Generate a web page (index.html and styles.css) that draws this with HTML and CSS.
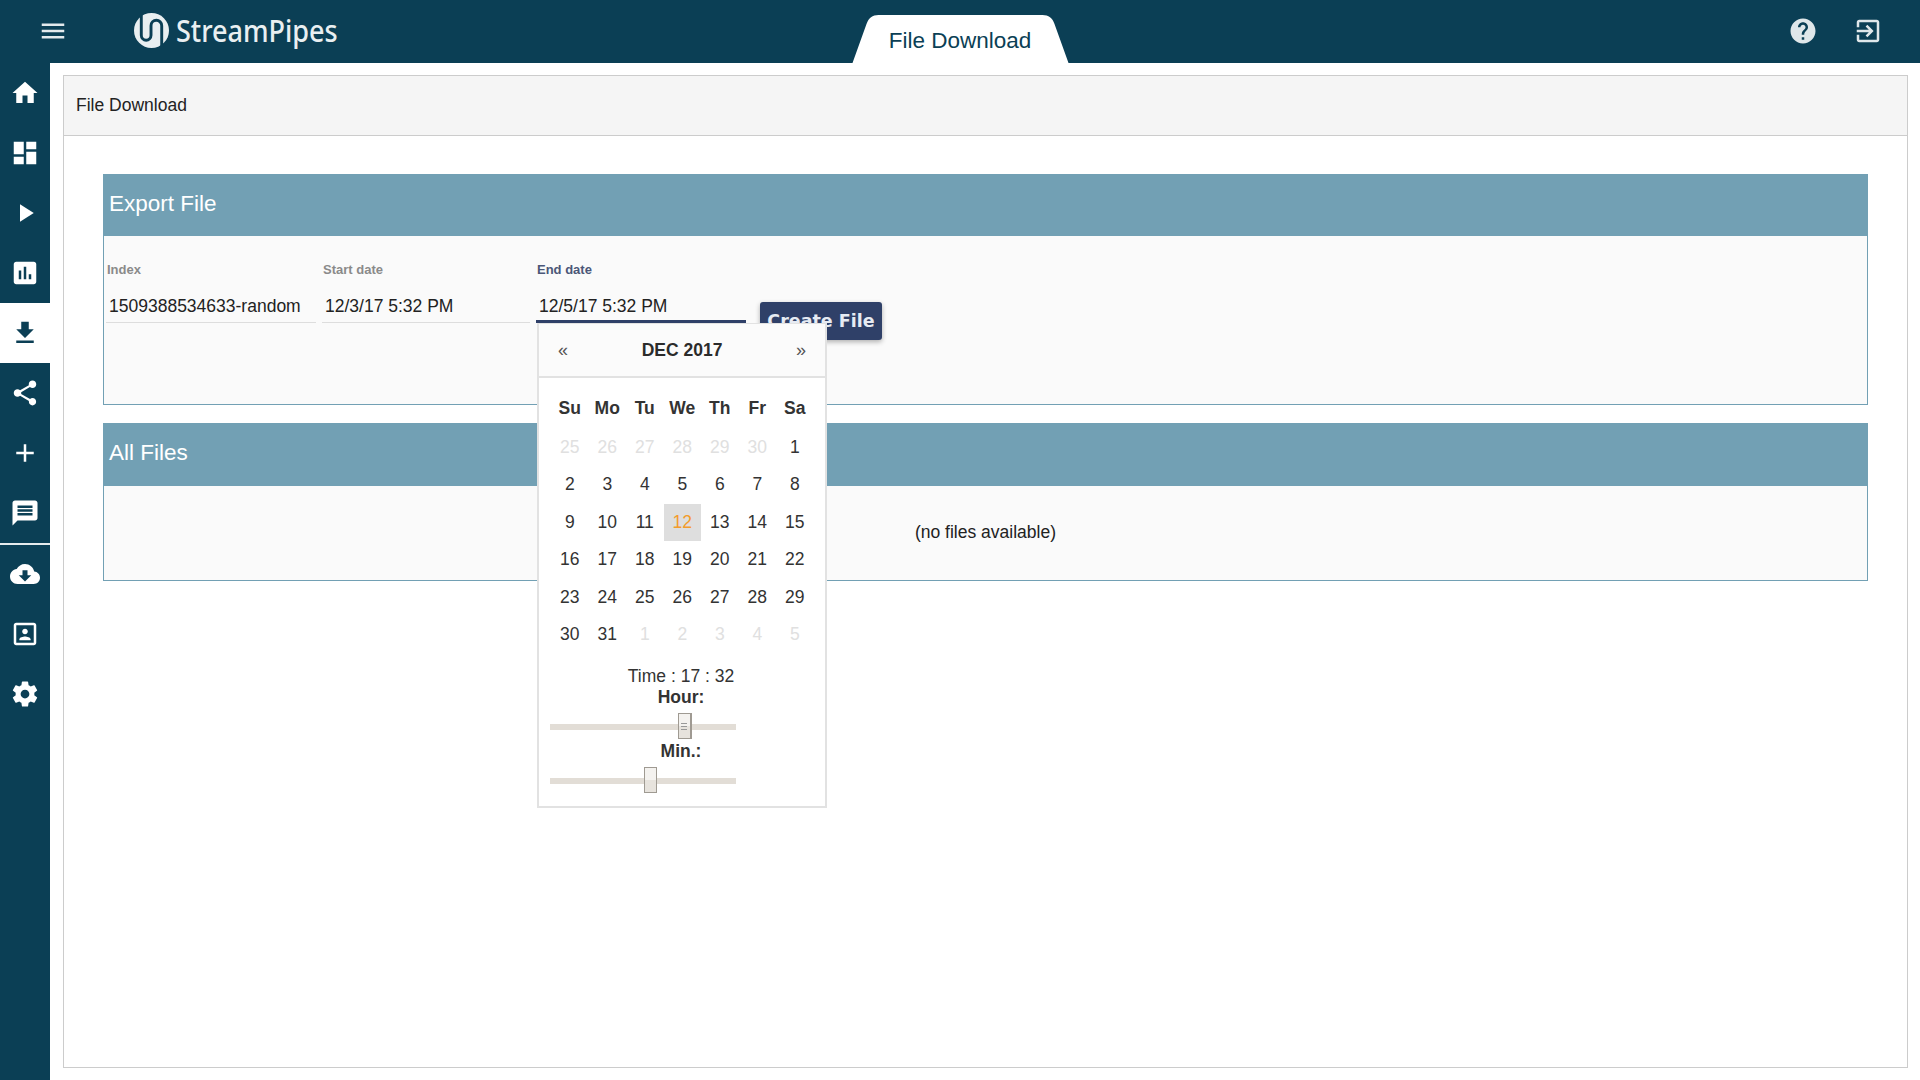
FILE: index.html
```html
<!DOCTYPE html>
<html lang="en">
<head>
    <meta charset="UTF-8">
    <title>StreamPipes - File Download</title>
    <link rel="stylesheet" href="styles.css">
</head>
<body>
    <header class="topbar">
        <div class="topbar-left">
            <button class="menu-btn" aria-label="Menu">
                <svg viewBox="0 0 24 24" class="icon-menu"><path d="M3 18h18v-2H3v2zm0-5h18v-2H3v2zm0-7v2h18V6H3z"/></svg>
            </button>
            <div class="logo">
                <svg viewBox="0 0 36 36" class="logo-mark">
                    <circle cx="18" cy="18" r="18"/>
                    <path class="logo-line" d="M7.500 2V23A5 5 0 0 0 17.500 23V13A5 5 0 0 1 28.500 13V34"/>
                </svg>
                <span class="logo-text">StreamPipes</span>
            </div>
        </div>
        <div class="tab-title">
            <svg viewBox="0 0 216 48" class="tab-shape"><path d="M0 48L14 9C16 3 20 0 26 0H190C196 0 200 3 202 9L216 48z"/></svg>
            <span class="tab-label">File Download</span>
        </div>
        <div class="topbar-right">
            <svg viewBox="0 0 24 24" class="top-icon"><path d="M12 2C6.480 2 2 6.480 2 12s4.480 10 10 10 10-4.480 10-10S17.520 2 12 2zm1 17h-2v-2h2v2zm2.070-7.750l-.9.920C13.450 12.900 13 13.500 13 15h-2v-.5c0-1.100.450-2.100 1.170-2.830l1.240-1.260c.370-.360.590-.860.590-1.410 0-1.100-.9-2-2-2s-2 .9-2 2H8c0-2.210 1.790-4 4-4s4 1.790 4 4c0 .880-.360 1.680-.930 2.250z"/></svg>
            <svg viewBox="0 0 24 24" class="top-icon"><path d="M10.090 15.590L11.500 17l5-5-5-5-1.410 1.410L12.670 11H3v2h9.670l-2.580 2.590zM19 3H5c-1.110 0-2 .9-2 2v4h2V5h14v14H5v-4H3v4c0 1.100.890 2 2 2h14c1.100 0 2-.9 2-2V5c0-1.100-.9-2-2-2z"/></svg>
        </div>
    </header>

    <div class="layout">
        <nav class="sidebar">
            <a class="nav-item"><svg viewBox="0 0 24 24"><path d="M10 20v-6h4v6h5v-8h3L12 3 2 12h3v8z"/></svg></a>
            <a class="nav-item"><svg viewBox="0 0 24 24"><path d="M3 13h8V3H3v10zm0 8h8v-6H3v6zm10 0h8V11h-8v10zm0-18v6h8V3h-8z"/></svg></a>
            <a class="nav-item"><svg viewBox="0 0 24 24"><path d="M8 5v14l11-7z"/></svg></a>
            <a class="nav-item"><svg viewBox="0 0 24 24"><path d="M19 3H5c-1.100 0-2 .9-2 2v14c0 1.100.9 2 2 2h14c1.100 0 2-.9 2-2V5c0-1.100-.9-2-2-2zM9 17H7v-7h2v7zm4 0h-2V7h2v10zm4 0h-2v-4h2v4z"/></svg></a>
            <a class="nav-item active"><svg viewBox="0 0 24 24"><path d="M19 9h-4V3H9v6H5l7 7 7-7zM5 18v2h14v-2H5z"/></svg></a>
            <a class="nav-item"><svg viewBox="0 0 24 24"><path d="M18 16.080c-.760 0-1.440.3-1.960.770L8.910 12.700c.050-.230.090-.460.090-.7s-.040-.470-.090-.7l7.050-4.110c.540.5 1.250.810 2.040.810 1.660 0 3-1.340 3-3s-1.340-3-3-3-3 1.340-3 3c0 .240.040.470.090.7L8.040 9.810C7.500 9.310 6.790 9 6 9c-1.660 0-3 1.340-3 3s1.340 3 3 3c.790 0 1.500-.310 2.040-.810l7.120 4.160c-.050.210-.080.430-.080.650 0 1.610 1.310 2.920 2.920 2.920 1.610 0 2.920-1.310 2.920-2.920s-1.310-2.920-2.920-2.920z"/></svg></a>
            <a class="nav-item"><svg viewBox="0 0 24 24"><path d="M19 13h-6v6h-2v-6H5v-2h6V5h2v6h6v2z"/></svg></a>
            <a class="nav-item"><svg viewBox="0 0 24 24"><path d="M20 2H4c-1.100 0-1.990.9-1.990 2L2 22l4-4h14c1.100 0 2-.9 2-2V4c0-1.100-.9-2-2-2zm-2 12H6v-2h12v2zm0-3H6V9h12v2zm0-3H6V6h12v2z"/></svg></a>
            <div class="nav-divider"></div>
            <a class="nav-item"><svg viewBox="0 0 24 24"><path d="M19.350 10.040C18.670 6.590 15.640 4 12 4 9.110 4 6.600 5.640 5.350 8.040 2.340 8.360 0 10.910 0 14c0 3.310 2.690 6 6 6h13c2.760 0 5-2.240 5-5 0-2.640-2.050-4.780-4.650-4.960zM17 13l-5 5-5-5h3V9h4v4h3z"/></svg></a>
            <a class="nav-item"><svg viewBox="0 0 24 24"><path d="M12 12.250c1.240 0 2.250-1.010 2.250-2.250S13.240 7.750 12 7.750 9.750 8.760 9.750 10s1.010 2.250 2.250 2.250zm4.500 4c0-1.500-3-2.250-4.500-2.250s-4.500.750-4.500 2.250V17h9v-.750zM19 3H5c-1.100 0-2 .9-2 2v14c0 1.100.9 2 2 2h14c1.100 0 2-.9 2-2V5c0-1.100-.9-2-2-2zm0 16H5V5h14v14z"/></svg></a>
            <a class="nav-item"><svg viewBox="0 0 24 24"><path d="M19.430 12.980c.040-.320.070-.640.070-.980s-.030-.660-.070-.980l2.110-1.650c.190-.150.240-.420.120-.640l-2-3.460c-.120-.220-.390-.3-.610-.220l-2.490 1c-.520-.4-1.080-.730-1.690-.980l-.380-2.650C14.460 2.180 14.250 2 14 2h-4c-.250 0-.460.180-.490.420l-.380 2.650c-.610.250-1.170.590-1.690.980l-2.490-1c-.230-.090-.490 0-.610.220l-2 3.460c-.130.220-.070.490.120.640l2.110 1.650c-.040.320-.070.650-.070.980s.030.660.070.980l-2.110 1.650c-.190.150-.240.420-.120.640l2 3.460c.120.220.390.3.610.220l2.490-1c.520.4 1.080.730 1.690.980l.380 2.650c.030.240.240.420.490.420h4c.250 0 .460-.180.490-.420l.380-2.650c.610-.250 1.170-.590 1.690-.980l2.490 1c.230.090.490 0 .610-.220l2-3.460c.120-.220.070-.490-.120-.640l-2.110-1.650zM12 15.500c-1.930 0-3.500-1.570-3.500-3.500s1.570-3.500 3.500-3.500 3.500 1.570 3.500 3.500-1.570 3.500-3.500 3.500z"/></svg></a>
        </nav>

        <main class="content">
            <section class="frame">
                <div class="frame-head">File Download</div>
                <div class="frame-body">
                    <div class="card">
                        <h2 class="card-head">Export File</h2>
                        <div class="card-body export-body">
                            <div class="field field-index">
                                <label>Index</label>
                                <div class="field-value">1509388534633-random</div>
                            </div>
                            <div class="field field-start">
                                <label>Start date</label>
                                <div class="field-value">12/3/17 5:32 PM</div>
                            </div>
                            <div class="field field-end focused">
                                <label>End date</label>
                                <div class="field-value">12/5/17 5:32 PM</div>
                                <div class="datepicker">
                                    <div class="dp-head">
                                        <span class="dp-arrow">«</span>
                                        <span class="dp-month">DEC 2017</span>
                                        <span class="dp-arrow">»</span>
                                    </div>
                                    <div class="dp-grid">
                                        <span class="dow">Su</span><span class="dow">Mo</span><span class="dow">Tu</span><span class="dow">We</span><span class="dow">Th</span><span class="dow">Fr</span><span class="dow">Sa</span>
                                        <span class="muted">25</span><span class="muted">26</span><span class="muted">27</span><span class="muted">28</span><span class="muted">29</span><span class="muted">30</span><span>1</span>
                                        <span>2</span><span>3</span><span>4</span><span>5</span><span>6</span><span>7</span><span>8</span>
                                        <span>9</span><span>10</span><span>11</span><span class="today">12</span><span>13</span><span>14</span><span>15</span>
                                        <span>16</span><span>17</span><span>18</span><span>19</span><span>20</span><span>21</span><span>22</span>
                                        <span>23</span><span>24</span><span>25</span><span>26</span><span>27</span><span>28</span><span>29</span>
                                        <span>30</span><span>31</span><span class="muted">1</span><span class="muted">2</span><span class="muted">3</span><span class="muted">4</span><span class="muted">5</span>
                                    </div>
                                    <div class="dp-time">
                                        <div>Time : 17 : 32</div>
                                        <div class="dp-unit">Hour:</div>
                                        <div class="slider"><span class="thumb thumb-grip" style="left: 72%"><i></i><i></i><i></i></span></div>
                                        <div class="dp-unit">Min.:</div>
                                        <div class="slider"><span class="thumb" style="left: 54%"></span></div>
                                    </div>
                                </div>
                            </div>
                            <button class="create-btn">Create File</button>
                        </div>
                    </div>
                    <div class="card">
                        <h2 class="card-head">All Files</h2>
                        <div class="card-body files-body">(no files available)</div>
                    </div>
                </div>
            </section>
        </main>
    </div>
</body>
</html>
```

FILE: styles.css
```css
* {
    box-sizing: border-box;
}
html, body {
    margin: 0;
    height: 100%;
    overflow: hidden;
}
body {
    font-family: "Liberation Sans", Arial, sans-serif;
    font-size: 17.5px;
    color: #333;
    background-color: #fff;
    display: flex;
    flex-direction: column;
}

/* top bar */
.topbar {
    height: 63px;
    flex: none;
    background-color: #0b3f55;
    display: grid;
    grid-template-columns: 1fr 217px 1fr;
}
.topbar-left {
    display: flex;
    align-items: center;
    padding-bottom: 2px;
}
.menu-btn {
    width: 30px;
    height: 30px;
    margin-left: 38px;
    padding: 0;
    border: none;
    background: none;
}
.icon-menu {
    display: block;
    width: 30px;
    height: 30px;
    fill: #e3eaed;
}
.logo {
    display: flex;
    align-items: center;
    margin-left: 66px;
    color: #e9eff1;
}
.logo-mark {
    width: 35px;
    height: 35px;
    fill: #e9eff1;
}
.logo-line {
    fill: none;
    stroke: #0b3f55;
    stroke-width: 3;
}
.logo-text {
    margin-left: 7px;
    font-family: "Noto Sans", sans-serif;
    font-size: 30px;
    font-weight: 500;
    line-height: 35px;
    display: inline-block;
    transform: scaleX(.9);
    transform-origin: left center;
}
.tab-title {
    position: relative;
    height: 48px;
    margin-top: 15px;
    display: flex;
    align-items: center;
    justify-content: center;
}
.tab-shape {
    position: absolute;
    inset: 0;
    width: 217px;
    height: 48px;
    fill: #fff;
}
.tab-label {
    position: relative;
    font-size: 22.5px;
    color: #0b3f55;
    padding-top: 3px;
}
.topbar-right {
    display: flex;
    justify-content: flex-end;
    align-items: center;
    gap: 35px;
    padding: 0 37px 2px 0;
}
.top-icon {
    width: 30px;
    height: 30px;
    fill: #dfe7ea;
}

/* sidebar */
.layout {
    flex: 1;
    display: flex;
    min-height: 0;
}
.sidebar {
    width: 50px;
    flex: none;
    background-color: #0b3f55;
}
.nav-item {
    display: flex;
    align-items: center;
    justify-content: center;
    height: 60px;
}
.nav-item svg {
    width: 30px;
    height: 30px;
    fill: #fff;
}
.nav-item.active {
    background-color: #fff;
}
.nav-item.active svg {
    fill: #0b3f55;
}
.nav-divider {
    height: 2px;
    margin-bottom: -1px;
    background-color: #fff;
    opacity: .9;
}

/* main area */
.content {
    flex: 1;
    padding: 12px 12px 12px 13px;
    min-width: 0;
}
.frame {
    height: 100%;
    border: 1px solid #ccc;
}
.frame-head {
    height: 60px;
    padding-left: 12px;
    line-height: 58px;
    background-color: #f5f5f5;
    border-bottom: 1px solid #ccc;
    color: #222;
}
.frame-body {
    padding: 38px 39px 0;
}
.card {
    margin-bottom: 18px;
}
.card-head {
    margin: 0;
    height: 62px;
    padding-left: 6px;
    line-height: 60px;
    font-size: 22.5px;
    font-weight: normal;
    color: #fff;
    background-color: #72a0b4;
}
.card + .card .card-head {
    height: 63px;
}
.card-body {
    border: 1px solid #72a0b4;
    border-top: none;
    background-color: #fafafa;
    color: #222;
}
.export-body {
    height: 169px;
    display: flex;
    padding: 0 0 0 2px;
    align-items: flex-start;
}
.files-body {
    height: 95px;
    padding-top: 36px;
    text-align: center;
    line-height: 20px;
}

/* form row */
.field {
    position: relative;
    height: 87px;
}
.field label {
    display: block;
    padding: 26px 0 0 1px;
    font-size: 13px;
    font-weight: bold;
    line-height: 16px;
    color: #8a8a8a;
}
.field-value {
    height: 45px;
    padding: 17px 0 0 3px;
    line-height: 22px;
    white-space: nowrap;
    border-bottom: 1px solid #ddd;
}
.field-index {
    width: 210px;
    margin-right: 6px;
}
.field-start {
    width: 208px;
    margin-right: 6px;
}
.field-end {
    width: 210px;
    margin-right: 14px;
}
.field-end.focused label {
    color: #4b5778;
}
.field-end.focused .field-value {
    border-bottom: 3px solid #2f4068;
}
.create-btn {
    margin-top: 66px;
    width: 122px;
    height: 38px;
    padding: 0;
    border: none;
    border-radius: 3px;
    font-family: "DejaVu Sans", Verdana, sans-serif;
    font-size: 17.5px;
    font-weight: bold;
    line-height: 36px;
    color: #e6ebf3;
    background-color: #2f4068;
    box-shadow: 0 2px 5px rgba(0, 0, 0, .3);
}

/* date picker, opens over the page */
.datepicker {
    position: absolute;
    z-index: 5;
    top: 87px;
    left: 1px;
    width: 290px;
    height: 485px;
    background-color: #fff;
    border: 2px solid #e2e2e2;
    border-top-width: 1px;
    color: #333;
}
.dp-head {
    display: flex;
    justify-content: space-between;
    align-items: center;
    height: 54px;
    padding: 0 19px;
    background-color: #fbfbfb;
    border-bottom: 2px solid #e2e2e2;
}
.dp-arrow {
    font-size: 18px;
    color: #555;
}
.dp-month {
    font-weight: bold;
    color: #2b2b2b;
}
.dp-grid {
    display: grid;
    grid-template-columns: repeat(7, 37.5px);
    grid-template-rows: 39px;
    grid-auto-rows: 37.4px;
    margin: 12px 0 0 12px;
    text-align: center;
    line-height: 37px;
}
.dow {
    font-weight: bold;
}
.muted {
    color: #e0e0e0;
}
.today {
    color: #f39c2b;
    background-color: #dedede;
}
.dp-time {
    margin-top: 13px;
    padding-right: 2px;
    text-align: center;
    line-height: 21px;
}
.dp-unit {
    font-weight: bold;
}
.slider {
    position: relative;
    width: 186px;
    height: 6px;
    margin: 16px 0 11px 11px;
    background-color: #e2ddd6;
}
.thumb {
    position: absolute;
    top: -11px;
    width: 13px;
    height: 26px;
    margin-left: -6px;
    border: 1px solid #9f9a92;
    background: linear-gradient(#f4f2ef 50%, #e7e3dd 50%);
    display: flex;
    flex-direction: column;
    justify-content: center;
    align-items: center;
    gap: 2px;
}
.thumb-grip {
    width: 14px;
    border-right-width: 2px;
}
.thumb i {
    display: block;
    width: 6px;
    height: 1px;
    background-color: #999;
}
```
